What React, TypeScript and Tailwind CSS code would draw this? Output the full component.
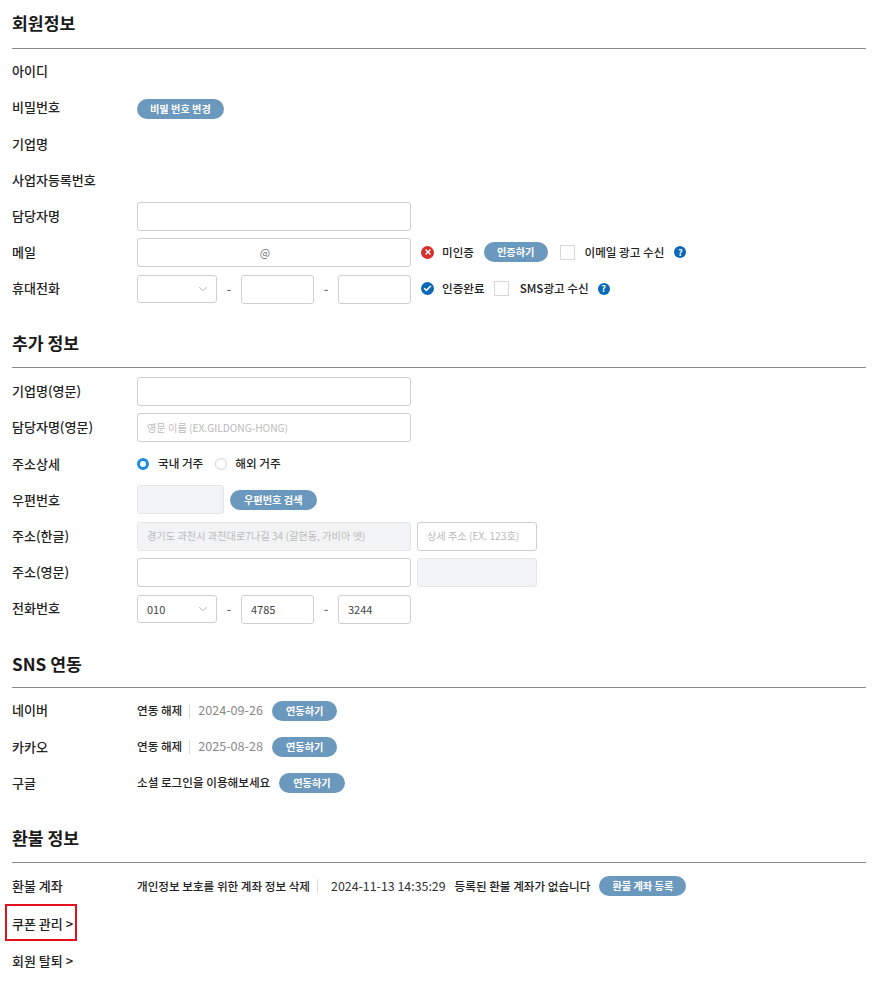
import React from 'react';
import { ChevronDown, Check, X } from 'lucide-react';

const Pill = ({ children, className = '', tight = false }: any) => (
  <button className={`h-[20px] rounded-full bg-[#6b98bd] text-[10.2px] font-bold leading-[20px] text-white whitespace-nowrap ${tight ? 'px-[13px]' : 'px-[14px]'} ${className}`}>
    {children}
  </button>
);

const Row = ({ label, children }: any) => (
  <div className="flex h-[36.2px] items-center">
    <div className="w-[125px] shrink-0 pb-[1px] text-[13px] font-medium text-[#222]">{label}</div>
    {children}
  </div>
);

const Field = ({ className = 'w-[274px]', value = '', disabled = false, placeholder = '' }: any) => (
  <div
    className={`flex h-[29px] shrink-0 items-center rounded-[3px] border px-[9px] ${disabled ? 'border-[#e6e6e6] bg-[#f2f3f4]' : 'border-[#cfcfcf] bg-white'} ${placeholder ? 'text-[10.2px] text-[#bbb]' : 'text-[11px] text-[#444]'} ${className}`}
  >
    {placeholder || value}
  </div>
);

const SelectBox = ({ value = '' }: any) => (
  <div className="flex h-[28px] w-[80px] shrink-0 items-center justify-between rounded-[3px] border border-[#cfcfcf] bg-white pl-[9px] pr-[5px] text-[11px] text-[#444]">
    <span>{value}</span>
    <ChevronDown size={14} strokeWidth={1.25} className="mr-[1px] text-[#999]" />
  </div>
);

const Tel = ({ a = '', b = '', c = '' }: any) => (
  <div className="flex w-[274px] shrink-0 items-center pt-[1px]">
    <SelectBox value={a} />
    <span className="w-[24px] text-center text-[13px] font-medium text-[#666]">-</span>
    <Field className="h-[26px] w-[73px]" value={b} />
    <span className="w-[24px] text-center text-[13px] font-medium text-[#666]">-</span>
    <Field className="h-[26px] w-[73px]" value={c} />
  </div>
);

const Status = ({ ok }: { ok: boolean }) => (
  <span className={`ml-[10px] flex h-[13px] w-[13px] shrink-0 items-center justify-center rounded-full ${ok ? 'bg-[#0b68b8]' : 'bg-[#d32f2f]'}`}>
    {ok ? <Check size={9} strokeWidth={4} className="text-white" /> : <X size={8} strokeWidth={4} className="text-white" />}
  </span>
);

const Help = ({ className = '' }: any) => (
  <span className={`flex h-[12px] w-[12px] shrink-0 items-center justify-center rounded-full bg-[#0b68b8] text-[9px] font-bold leading-none text-white ${className}`}>?</span>
);

const Checkbox = ({ className = '' }: any) => <span className={`block h-[15px] w-[15px] shrink-0 border border-[#d8d8d8] bg-white ${className}`} />;

const Small = ({ children, className = '' }: any) => (
  <span className={`text-[11.6px] font-medium text-[#222] whitespace-nowrap ${className}`}>{children}</span>
);

const Section = ({ title, className = '', titleClass = 'pb-[2px]', bodyClass = 'pt-[5px]', children }: any) => (
  <section className={className}>
    <h2 className={`flex h-[49px] items-center border-b border-[#8c8c8c] text-[17.2px] font-bold text-[#1a1a1a] ${titleClass}`}>{title}</h2>
    <div className={bodyClass}>{children}</div>
  </section>
);

const Linked = ({ date }: { date: string }) => (
  <>
    <Small>연동 해제</Small>
    <span className="ml-[7px] h-[14px] w-px bg-[#ddd]" />
    <span className="ml-[8px] text-[12.6px] text-[#888]">{date}</span>
    <Pill className="ml-[9px]">연동하기</Pill>
  </>
);

export default function App() {
  return (
    <div className="h-[984px] w-[880px] overflow-hidden bg-white pl-[12px] pr-[14px] font-['Noto_Sans_CJK_KR','Noto_Sans',sans-serif]">
      <Section title="회원정보" bodyClass="pt-[4.4px]">
        <Row label="아이디" />
        <Row label="비밀번호"><Pill tight className="mt-[3px]">비밀 번호 변경</Pill></Row>
        <Row label="기업명" />
        <Row label="사업자등록번호" />
        <Row label="담당자명"><Field /></Row>
        <Row label="메일">
          <Field className="w-[274px] justify-center pr-[27px] text-[#777]" value="@" />
          <Status ok={false} />
          <Small className="ml-[8px]">미인증</Small>
          <Pill tight className="ml-[10px]">인증하기</Pill>
          <Checkbox className="ml-[12px]" />
          <Small className="ml-[10px]">이메일 광고 수신</Small>
          <Help className="ml-[10px]" />
        </Row>
        <Row label="휴대전화">
          <Tel />
          <Status ok />
          <Small className="ml-[8px]">인증완료</Small>
          <Checkbox className="ml-[9px]" />
          <Small className="ml-[11px]">SMS광고 수신</Small>
          <Help className="ml-[9px]" />
        </Row>
      </Section>

      <Section title="추가 정보" className="mt-[12.6px]" titleClass="">
        <Row label="기업명(영문)"><Field /></Row>
        <Row label="담당자명(영문)"><Field placeholder="영문 이름 (EX.GILDONG-HONG)" /></Row>
        <Row label="주소상세">
          <span className="h-[12px] w-[12px] shrink-0 rounded-full border-[3.5px] border-[#1e88e5] bg-white" />
          <Small className="ml-[9px]">국내 거주</Small>
          <span className="ml-[12px] h-[12px] w-[12px] shrink-0 rounded-full border border-[#d4d4d4] bg-white" />
          <Small className="ml-[8px]">해외 거주</Small>
        </Row>
        <Row label="우편번호">
          <Field disabled className="w-[87px]" />
          <Pill className="ml-[6px]">우편번호 검색</Pill>
        </Row>
        <Row label="주소(한글)">
          <Field disabled className="w-[274px]" placeholder="경기도 과천시 과천대로7나길 34 (갈현동, 가비아 엣)" />
          <Field className="ml-[6px] w-[120px]" placeholder="상세 주소 (EX. 123호)" />
        </Row>
        <Row label="주소(영문)">
          <Field />
          <Field disabled className="ml-[6px] w-[120px]" />
        </Row>
        <Row label="전화번호"><Tel a="010" b="4785" c="3244" /></Row>
      </Section>

      <Section title="SNS 연동" className="mt-[12px]" titleClass="pt-[2px]">
        <Row label="네이버"><Linked date="2024-09-26" /></Row>
        <Row label="카카오"><Linked date="2025-08-28" /></Row>
        <Row label="구글">
          <Small>소셜 로그인을 이용해보세요</Small>
          <Pill className="ml-[9px]">연동하기</Pill>
        </Row>
      </Section>

      <Section title="환불 정보" className="mt-[13px]" titleClass="">
        <Row label="환불 계좌">
          <Small>개인정보 보호를 위한 계좌 정보 삭제</Small>
          <span className="ml-[7px] h-[14px] w-px bg-[#ddd]" />
          <span className="ml-[13px] text-[12.4px] text-[#333]">2024-11-13 14:35:29</span>
          <Small className="ml-[9px]">등록된 환불 계좌가 없습니다</Small>
          <Pill tight className="ml-[9px]">환불 계좌 등록</Pill>
        </Row>
        <div className="relative flex h-[38px] items-center text-[13px] font-medium text-[#222]">
          쿠폰 관리 &gt;
          <span className="absolute left-[-7px] top-[0px] h-[37px] w-[72px] border-2 border-[#e3101e]" />
        </div>
        <div className="flex h-[37px] items-center text-[13px] font-medium text-[#222]">회원 탈퇴 &gt;</div>
      </Section>
    </div>
  );
}
